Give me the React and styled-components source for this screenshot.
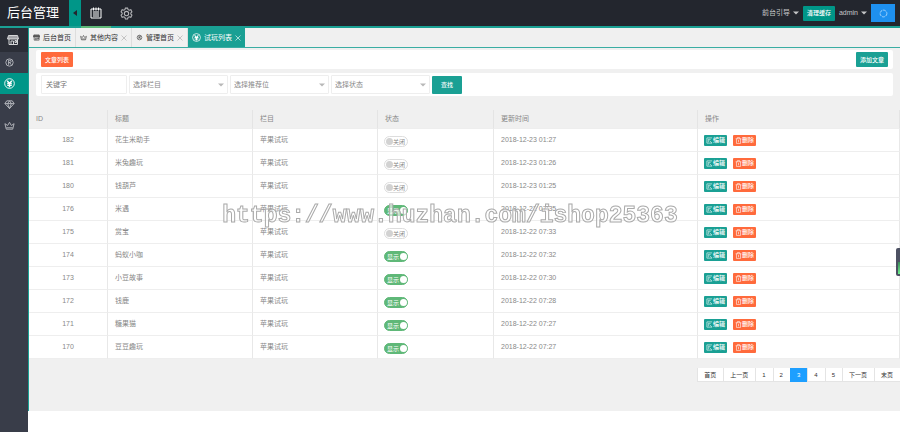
import { useState } from 'react';
import styled, { createGlobalStyle, css } from 'styled-components';


const GlobalStyle = createGlobalStyle`
  * {
    box-sizing: border-box;
  }

  body {
    margin: 0;
    background: #fff;
    color: #333;
    font-family: "Liberation Sans", "Noto Sans CJK SC", sans-serif;
    font-size: 7px;
    line-height: 10px;
  }

  button, input, select {
    margin: 0;
    padding: 0;
    border: 0;
    font: inherit;
    color: inherit;
    background: none;
  }

  a {
    color: inherit;
    text-decoration: none;
  }
`

const Page = styled.div`
  display: flex;
  flex-direction: column;
  min-height: 100vh;
`

// Top bar

const Header = styled.header`
  display: flex;
  height: 28px;
  background: #23262e;
  border-bottom: 2px solid #1aa094;
  color: #fff;
`

const Brand = styled.h1`
  width: 69px;
  margin: 0;
  padding-left: 7px;
  font-size: 13px;
  font-weight: 400;
  line-height: 26px;
  white-space: nowrap;
`

const MenuToggle = styled.button`
  display: flex;
  align-items: center;
  justify-content: center;
  width: 12px;
  background: #009688;
  color: #23262e;
`

const NavLink = styled.a`
  display: flex;
  align-items: center;
  justify-content: center;
  width: 30px;
  height: 28px;
  border-bottom: 2px solid ${(props) => (props.$active ? '#5fb878' : 'transparent')};
  color: ${(props) => (props.$active ? '#fff' : '#b5b6b9')};
`

const HeaderRight = styled.div`
  display: flex;
  align-items: center;
  gap: 4px;
  margin-left: auto;
  padding-right: 5px;
`

const MenuButton = styled.button`
  display: flex;
  align-items: center;
  gap: 3px;
  color: #c5c6c8;
`

const BlueButton = styled.button`
  display: flex;
  align-items: center;
  justify-content: center;
  width: 24px;
  height: 18px;
  background: #1e90ef;
`

const Button = styled.button`
  min-width: ${(props) => (props.$tall ? '30px' : '32px')};
  height: ${(props) => (props.$tall ? '18px' : '15px')};
  border-radius: 1px;
  background: ${(props) => props.$color || '#1aa094'};
  color: #fff;
  font-size: 6px;
  font-weight: 500;
`

// Side menu

const Body = styled.div`
  display: flex;
  flex: 1;
`

const Sidebar = styled.nav`
  flex: none;
  width: 28px;
  background: #393d49;
`

const SideHead = styled.a`
  display: flex;
  align-items: center;
  height: 24px;
  padding-left: 7px;
  background: #2b2e37;
  color: #d5d6d8;
`

const SideLink = styled.a`
  display: flex;
  align-items: center;
  height: 21px;
  padding-left: 4px;
  background: ${(props) => (props.$active ? '#009688' : 'transparent')};
  color: ${(props) => (props.$active ? '#fff' : '#b8bac0')};
`

const Main = styled.div`
  display: flex;
  flex: 1;
  flex-direction: column;
  min-width: 0;
`

const Content = styled.main`
  flex: 1;
  background: #f0f0f0;
  border-left: 1px solid #1aa094;
`

const Footer = styled.footer`
  height: 21px;
  background: #fff;
`

// Tabs

const Tabs = styled.div`
  display: flex;
  height: 20px;
  border-bottom: 1px solid #3aada3;
`

const Tab = styled.div`
  display: flex;
  align-items: center;
  gap: 3px;
  padding: 0 4px;
  border-right: 1px solid #ddd;
  white-space: nowrap;

  ${(props) => props.$active && css`
    border-right: 0;
    background: #1aa094;
    color: #fff;
  `}
`

const TabLink = styled.button`
  display: flex;
  align-items: center;
  gap: 3px;
`

const TabClose = styled.button`
  display: flex;
  color: ${(props) => (props.$active ? '#d3efec' : '#b4b4b4')};
`

// Panels and search

const Panels = styled.div`
  display: flex;
  flex-direction: column;
  gap: 4px;
  padding: 2px 7px 14px;
`

const Panel = styled.div`
  display: flex;
  justify-content: space-between;
  padding: 2px 5px;
  border-radius: 2px;
  background: #fff;
`

const SearchForm = styled.form`
  display: flex;
  align-items: center;
  gap: 2px;
  padding: 2px 5px;
  border-radius: 2px;
  background: #fff;
`

const field = css`
  height: 19px;
  border: 1px solid #eee;
  border-radius: 1px;
  background: #fff;
  color: #888;
`

const TextField = styled.input`
  ${field}
  width: 86px;
  padding-left: 4px;

  &::placeholder {
    color: #777;
    opacity: 1;
  }
`

const SelectBox = styled.div`
  position: relative;
  width: 99px;
`

const Select = styled.select`
  ${field}
  display: block;
  width: 100%;
  padding-left: 3px;
  appearance: none;
`

const SelectArrow = styled.span`
  position: absolute;
  top: 0;
  right: 4px;
  display: flex;
  align-items: center;
  height: 100%;
  color: #b8b8b8;
  pointer-events: none;
`

// Table

const Table = styled.table`
  width: 100%;
  table-layout: fixed;
  border-collapse: separate;
  border-spacing: 0;
  color: #888;
`

const Col = styled.col`
  width: ${(props) => (props.$share / 871) * 100}%;
`

const Th = styled.th`
  height: 19px;
  padding: 0 7px;
  border-right: 1px solid #e4e4e4;
  border-bottom: 1px solid #eee;
  font-weight: 400;
  text-align: left;
`

const Td = styled.td`
  height: 23px;
  padding: 0 7px;
  border-right: 1px solid #e8e8e8;
  border-bottom: 1px solid #eee;
  background: #fff;
  text-align: ${(props) => (props.$center ? 'center' : 'left')};
`

const SwitchTd = styled(Td)`
  padding: 3px 6px 0;
`

const ActionTd = styled(Td)`
  padding: 0 6px;
`

const Actions = styled.div`
  display: flex;
  gap: 6px;
`

const ActionButton = styled.button`
  display: flex;
  align-items: center;
  justify-content: center;
  width: 23px;
  height: 11px;
  border-radius: 1px;
  background: ${(props) => (props.$danger ? '#ff6a3c' : '#1aa094')};
  color: #fff;
  font-size: 6px;
  font-weight: 500;
  white-space: nowrap;
`

const SwitchLabel = styled.label`
  position: relative;
  display: flex;
  flex-direction: ${(props) => (props.$on ? 'row' : 'row-reverse')};
  align-items: center;
  justify-content: space-between;
  width: 24px;
  height: 11px;
  padding: ${(props) => (props.$on ? '0 0 0 2px' : '0 2px 0 1px')};
  border: 1px solid ${(props) => (props.$on ? '#5fb878' : '#ddd')};
  border-radius: 6px;
  background: ${(props) => (props.$on ? '#5fb878' : '#fff')};
  color: ${(props) => (props.$on ? '#fff' : '#888')};
  font-size: 6px;
  white-space: nowrap;
`

const SwitchInput = styled.input`
  position: absolute;
  inset: 0;
  opacity: 0;
`

const SwitchDot = styled.span`
  flex: none;
  width: 7px;
  height: 7px;
  border-radius: 50%;
  background: ${(props) => (props.$on ? '#fff' : '#d2d2d2')};
`

// Pagination

const Pager = styled.nav`
  display: flex;
  justify-content: flex-end;
  margin-top: 9px;
`

const PageLink = styled.a`
  height: 14px;
  padding: 0 7px 0 6px;
  border: solid #e4e4e4;
  border-width: 0 0 1px 1px;
  background: #fff;
  font-size: 6px;
  line-height: 14px;
  white-space: nowrap;

  ${(props) => props.$active && css`
    border-color: #1e9fff;
    background: #1e9fff;
    color: #fff;
  `}
`

// Things that lie over the page

const Watermark = styled.div`
  position: fixed;
  inset: 0;
  display: flex;
  align-items: center;
  justify-content: center;
  color: rgba(255, 255, 255, 0.6);
  font-family: "Liberation Mono", monospace;
  font-size: 23px;
  font-weight: 700;
  line-height: 28px;
  -webkit-text-stroke: 1px #aaa;
  pointer-events: none;
`

const Meter = styled.div`
  position: fixed;
  top: 248px;
  right: 0;
  display: flex;
  align-items: flex-end;
  width: 4px;
  height: 28px;
  padding: 2px 0 2px 2px;
  border-radius: 2px 0 0 2px;
  background: #4d5163;

  &::after {
    content: '';
    width: 2px;
    height: 12px;
    background: linear-gradient(#3c8a5a, #6ff08c);
  }
`

// Icons

const Svg = ({ size = 6, children }) => (
  <svg width={size} height={size} viewBox="0 0 24 24" fill="none" stroke="currentColor" strokeWidth="2" aria-hidden="true">
    {children}
  </svg>
)

const Caret = () => (
  <svg width="6" height="4" viewBox="0 0 6 4" aria-hidden="true">
    <path d="M0 0.5h6L3 3.5z" fill="currentColor" />
  </svg>
)

const ShopIcon = ({ size }) => (
  <Svg size={size}>
    <path d="M3 3h18l2 7H1z" fill="currentColor" fillOpacity="0.7" />
    <path d="M4 10v11h17V10M8 21v-7h5v7M16 13h3v4h-3z" />
  </Svg>
)

const NoteIcon = () => (
  <Svg size={12}>
    <path d="M2 4h20v18H2zM7 1v6M12 1v6M17 1v6M6 10h12M6 14h12M6 18h12" />
  </Svg>
)

const GearIcon = () => (
  <Svg size={13}>
    <path d="M10 2h4l1 3 2 1 3-1 2 4-2 2v2l2 2-2 4-3-1-2 1-1 3h-4l-1-3-2-1-3 1-2-4 2-2v-2L2 9l2-4 3 1 2-1z" />
    <circle cx="12" cy="12" r="4" />
  </Svg>
)

const RegisteredIcon = ({ size }) => (
  <Svg size={size}>
    <circle cx="12" cy="12" r="8" />
    <path d="M10 17V7h3a2 2 0 0 1 0 5h-3M12 12l4 5" />
  </Svg>
)

const YenIcon = ({ size }) => (
  <Svg size={size}>
    <circle cx="12" cy="12" r="10.5" />
    <path d="M7 6l5 6 5-6M12 12v8M7 12h10M7 16h10" strokeWidth="3" />
  </Svg>
)

const DiamondIcon = ({ size }) => (
  <Svg size={size}>
    <path d="M6 4h12l4 6-10 11L2 10zM2 10h20M8 10l4 11 4-11M8 10l4-6 4 6" />
  </Svg>
)

const CrownIcon = ({ size }) => (
  <Svg size={size}>
    <path d="M5 20L2 8l6 4 4-7 4 7 6-4-3 12zM5 17h14" />
  </Svg>
)

const CloseIcon = () => (
  <Svg size={6}>
    <path d="M2 2l20 20M22 2L2 22" strokeWidth="3" />
  </Svg>
)

const EditIcon = () => (
  <Svg size={7}>
    <path d="M21 3H3v18h18M8 8h8M8 8v10M12 13l8 7" />
  </Svg>
)

const TrashIcon = () => (
  <Svg size={7}>
    <path d="M2 6h20M8 6V2h8v4M5 6v16h14V6M12 10v8" />
  </Svg>
)

const LoadIcon = () => (
  <Svg size={9}>
    <circle cx="12" cy="12" r="9" stroke="#c5e4ff" strokeDasharray="8 2" />
  </Svg>
)

const tabs = [
  { title: '后台首页', icon: ShopIcon, fixed: true },
  { title: '其他内容', icon: CrownIcon },
  { title: '管理首页', icon: RegisteredIcon },
  { title: '试玩列表', icon: YenIcon, active: true },
]

const sideLinks = [
  { title: '管理首页', icon: RegisteredIcon },
  { title: '试玩列表', icon: YenIcon, active: true },
  { title: '会员', icon: DiamondIcon },
  { title: '其他内容', icon: CrownIcon },
]

const columns = [
  { title: 'ID', share: 79 },
  { title: '标题', share: 145 },
  { title: '栏目', share: 125 },
  { title: '状态', share: 116 },
  { title: '更新时间', share: 204 },
  { title: '操作', share: 202 },
]

const articles = [
  { id: 182, title: '花生米助手', shown: false, time: '2018-12-23 01:27' },
  { id: 181, title: '米兔趣玩', shown: false, time: '2018-12-23 01:26' },
  { id: 180, title: '钱葫芦', shown: false, time: '2018-12-23 01:25' },
  { id: 176, title: '米遇', shown: true, time: '2018-12-22 07:35' },
  { id: 175, title: '赏宝', shown: false, time: '2018-12-22 07:33' },
  { id: 174, title: '蚂蚁小咖', shown: true, time: '2018-12-22 07:32' },
  { id: 173, title: '小豆故事', shown: true, time: '2018-12-22 07:30' },
  { id: 172, title: '钱鹿', shown: true, time: '2018-12-22 07:28' },
  { id: 171, title: '糖果猫', shown: true, time: '2018-12-22 07:27' },
  { id: 170, title: '豆豆趣玩', shown: true, time: '2018-12-22 07:27' },
]

const pages = ['首页', '上一页', '1', '2', '3', '4', '5', '下一页', '末页']

const Switch = ({ defaultOn, name }) => {
  const [on, setOn] = useState(defaultOn)

  return (
    <SwitchLabel $on={on}>
      <SwitchInput type="checkbox" aria-label={name} checked={on} onChange={() => setOn(!on)} />
      <span>{on ? '显示' : '关闭'}</span>
      <SwitchDot $on={on} />
    </SwitchLabel>
  )
}

const SearchSelect = ({ title }) => (
  <SelectBox>
    <Select aria-label={title}>
      <option>{title}</option>
    </Select>
    <SelectArrow><Caret /></SelectArrow>
  </SelectBox>
)

const ArticleTable = () => (
  <Table>
    <colgroup>
      {columns.map((column) => <Col key={column.title} $share={column.share} />)}
    </colgroup>
    <thead>
      <tr>
        {columns.map((column) => <Th key={column.title}>{column.title}</Th>)}
      </tr>
    </thead>
    <tbody>
      {articles.map((article) => (
        <tr key={article.id}>
          <Td $center>{article.id}</Td>
          <Td>{article.title}</Td>
          <Td>苹果试玩</Td>
          <SwitchTd><Switch name={article.title} defaultOn={article.shown} /></SwitchTd>
          <Td>{article.time}</Td>
          <ActionTd>
            <Actions>
              <ActionButton><EditIcon />编辑</ActionButton>
              <ActionButton $danger><TrashIcon />删除</ActionButton>
            </Actions>
          </ActionTd>
        </tr>
      ))}
    </tbody>
  </Table>
)

export default function App() {
  return (
    <Page>
      <GlobalStyle />
      <Header>
        <Brand>后台管理</Brand>
        <MenuToggle aria-label="收起菜单">
          <svg width="4" height="6" viewBox="0 0 4 6"><path d="M4 0v6L0 3z" fill="currentColor" /></svg>
        </MenuToggle>
        <NavLink href="#" $active aria-label="内容"><NoteIcon /></NavLink>
        <NavLink href="#" aria-label="设置"><GearIcon /></NavLink>
        <HeaderRight>
          <MenuButton>前台引导 <Caret /></MenuButton>
          <Button $color="#009688">清理缓存</Button>
          <MenuButton>admin <Caret /></MenuButton>
          <BlueButton aria-label="刷新"><LoadIcon /></BlueButton>
        </HeaderRight>
      </Header>
      <Body>
        <Sidebar>
          <SideHead href="#" aria-label="后台首页"><ShopIcon size={12} /></SideHead>
          {sideLinks.map(({ title, icon: Icon, active }) => (
            <SideLink key={title} href="#" aria-label={title} $active={active}><Icon size={11} /></SideLink>
          ))}
        </Sidebar>
        <Main>
          <Content>
            <Tabs>
              {tabs.map(({ title, icon: Icon, active, fixed }) => (
                <Tab key={title} $active={active}>
                  <TabLink><Icon size={active ? 9 : 7} />{title}</TabLink>
                  {!fixed && <TabClose $active={active} aria-label="关闭"><CloseIcon /></TabClose>}
                </Tab>
              ))}
            </Tabs>
            <Panels>
              <Panel>
                <Button $color="#ff6a3c">文章列表</Button>
                <Button>添加文章</Button>
              </Panel>
              <SearchForm onSubmit={(event) => event.preventDefault()}>
                <TextField type="text" placeholder="关键字" aria-label="关键字" />
                <SearchSelect title="选择栏目" />
                <SearchSelect title="选择推荐位" />
                <SearchSelect title="选择状态" />
                <Button $tall>查找</Button>
              </SearchForm>
            </Panels>
            <ArticleTable />
            <Pager>
              {pages.map((page) => (
                <PageLink key={page} href="#" $active={page === '3'}>{page}</PageLink>
              ))}
            </Pager>
          </Content>
          <Footer />
        </Main>
      </Body>
      <Watermark>https://www.huzhan.com/ishop25363</Watermark>
      <Meter />
    </Page>
  )
}
